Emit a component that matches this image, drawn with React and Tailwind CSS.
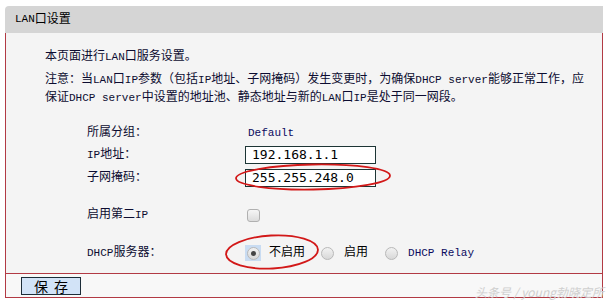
import React from 'react';

const font = "font-['Liberation_Mono','Noto_Sans_CJK_SC',monospace]";

// latin runs are set a bit narrower, like the bitmap font of the original
const L = ({ children }) => <span className="text-[11px]">{children}</span>;

const Radio = ({ checked }) => (
  <span className={`flex items-center justify-center w-[16px] h-[16px] ${checked ? 'bg-[#c9dcf2]' : ''}`}>
    <span className="flex items-center justify-center w-[13px] h-[13px] rounded-full border border-[#b8b8b8] bg-gradient-to-b from-[#f2f2f2] to-[#d8d8d8]">
      {checked && <span className="w-[5px] h-[5px] rounded-full bg-[#444]" />}
    </span>
  </span>
);

const Row = ({ label, h = 'h-[22px]', children }) => (
  <div className={`flex items-center ${h}`}>
    <div className="w-[158px] shrink-0">{label}</div>
    <div className="flex items-center">{children}</div>
  </div>
);

export default function App() {
  return (
    <div className={`relative w-[610px] h-[303px] bg-white pt-[6px] pl-[5px] pr-[7px] text-[12px] text-[#0c0c30] ${font}`}>
      {/* header */}
      <div className="h-[27px] bg-[#d5d5d5] rounded-tl-[4px] pl-[10px] flex items-center text-black">
        <L>LAN</L>口设置
      </div>

      {/* body */}
      <div className="h-[240px] bg-[#f4f4f4] border-l border-r border-[#b23a44] pl-[39px] pt-[15px]">
        <div className="leading-[18px] whitespace-nowrap">本页面进行<L>LAN</L>口服务设置。</div>
        <div className="mt-[5px] leading-[18px] whitespace-nowrap">
          <div>注意：当<L>LAN</L>口<L>IP</L>参数（包括<L>IP</L>地址、子网掩码）发生变更时，为确保<L>DHCP server</L>能够正常工作，应</div>
          <div>保证<L>DHCP server</L>中设置的地址池、静态地址与新的<L>LAN</L>口<L>IP</L>是处于同一网段。</div>
        </div>

        <div className="mt-[15px] pl-[42px]">
          <Row label="所属分组：">
            <span className="pl-[3px] text-[#0a0a60] text-[11px]">Default</span>
          </Row>
          <Row label={<><L>IP</L>地址：</>}>
            <div className="w-[131px] h-[18px] border border-[#1d3535] bg-white flex items-center pl-[6px] text-[13px] text-black font-['DejaVu_Sans_Mono',monospace]">
              192.168.1.1
            </div>
          </Row>
          <Row label="子网掩码：" h="h-[23px]">
            <div className="w-[131px] h-[18px] border border-[#1d3535] bg-white flex items-center pl-[6px] text-[13px] text-black font-['DejaVu_Sans_Mono',monospace]">
              255.255.248.0
            </div>
          </Row>
          <div className="h-[15px]" />
          <Row label={<>启用第二<L>IP</L></>}>
            <span className="ml-[2px] w-[13px] h-[13px] rounded-[3px] border border-[#b0b0b0] bg-gradient-to-b from-[#f6f6f6] to-[#dcdcdc]" />
          </Row>
          <div className="h-[16px]" />
          <Row label={<><L>DHCP</L>服务器：</>}>
            <Radio checked />
            <span className="ml-[8px] text-black">不启用</span>
            <span className="ml-[14px]"><Radio /></span>
            <span className="ml-[9px] text-black">启用</span>
            <span className="ml-[15px]"><Radio /></span>
            <span className="ml-[9px] text-[#0a0a60] text-[11px]">DHCP Relay</span>
          </Row>
        </div>
      </div>

      {/* footer */}
      <div className="h-[25px] border border-[#b23a44] bg-[#f8f8f8] pl-[15px] pt-[3px]">
        <button className="w-[60px] h-[18px] border border-[#1c2c38] bg-[#d2e3f7] text-[14px] leading-none text-black font-['Noto_Sans_CJK_SC',sans-serif] tracking-[6px] pl-[6px]">
          保存
        </button>
      </div>

      {/* watermark */}
      <div className="absolute right-[6px] bottom-[2px] text-[12px] italic text-[#cfcfcf] font-['Noto_Sans_CJK_SC',sans-serif]">
        头条号 / young勃晓定所
      </div>

      {/* red annotation ellipses */}
      <svg className="absolute inset-0 pointer-events-none" width="610" height="303">
        <ellipse cx="313" cy="177" rx="77" ry="12.5" fill="none" stroke="#d21818" strokeWidth="1.8" transform="rotate(-1 313 177)" />
        <ellipse cx="272" cy="252" rx="46" ry="16.5" fill="none" stroke="#d21818" strokeWidth="1.8" transform="rotate(-3 272 252)" />
      </svg>
    </div>
  );
}
